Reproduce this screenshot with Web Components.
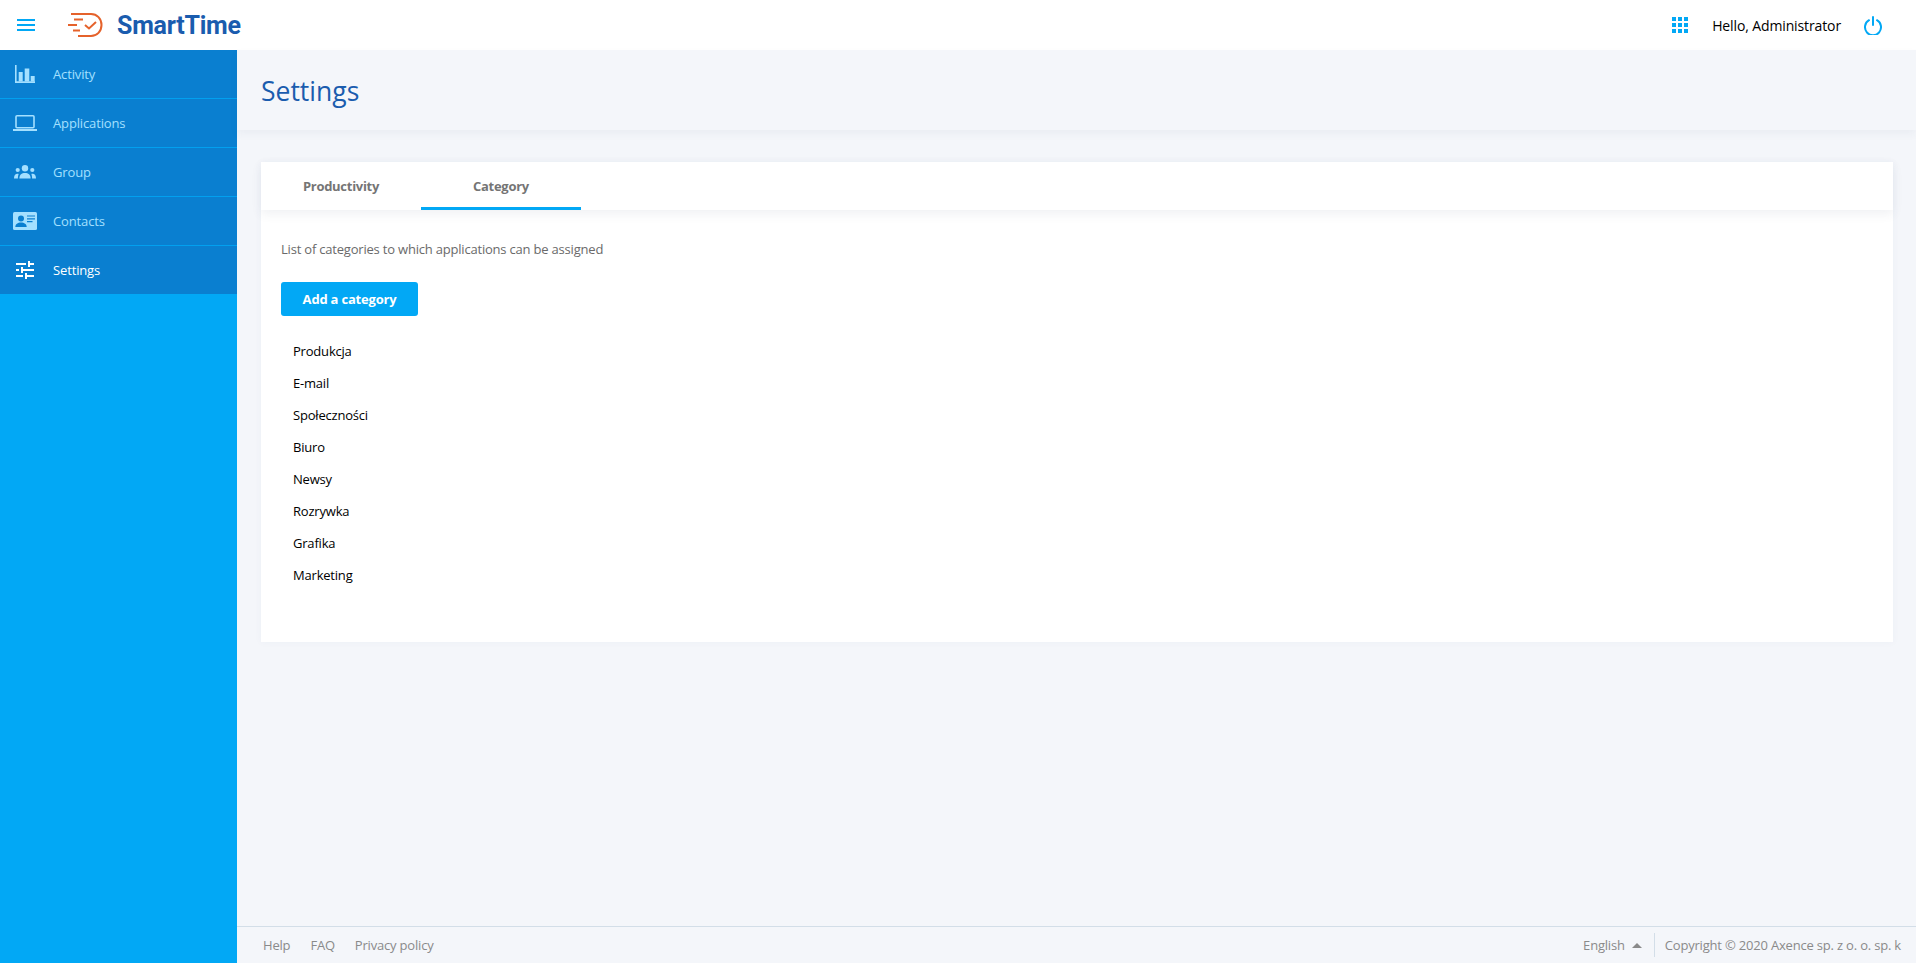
<!DOCTYPE html>
<html lang="en">
<head>
<meta charset="utf-8">
<title>SmartTime</title>
<style>
  html, body { margin: 0; height: 100%; }
  body { font-family: "Open Sans", "Liberation Sans", sans-serif; background: #f4f6fa; overflow: hidden; }
  st-app { height: 963px; }
</style>
</head>
<body>
<st-app>
  <st-header slot="header"></st-header>
  <st-sidebar slot="sidebar">
    <st-nav-item icon="activity">Activity</st-nav-item>
    <st-nav-item icon="applications">Applications</st-nav-item>
    <st-nav-item icon="group">Group</st-nav-item>
    <st-nav-item icon="contacts">Contacts</st-nav-item>
    <st-nav-item icon="settings" active>Settings</st-nav-item>
  </st-sidebar>
  <st-page-title slot="title">Settings</st-page-title>
  <st-card slot="main">
    <st-tab slot="tabs">Productivity</st-tab>
    <st-tab slot="tabs" active>Category</st-tab>
    <st-desc>List of categories to which applications can be assigned</st-desc>
    <st-button>Add a category</st-button>
    <st-category-list>
      <st-category>Produkcja</st-category>
      <st-category>E-mail</st-category>
      <st-category>Społeczności</st-category>
      <st-category>Biuro</st-category>
      <st-category>Newsy</st-category>
      <st-category>Rozrywka</st-category>
      <st-category>Grafika</st-category>
      <st-category>Marketing</st-category>
    </st-category-list>
  </st-card>
  <st-footer slot="footer"></st-footer>
</st-app>

<script>
const ICONS = {
  activity: `<svg width="20" height="18" viewBox="0 0 20 18" fill="currentColor"><path d="M0 0h1.600v16.200H20V18H0z"/><rect x="3.700" y="7" width="4" height="9.500"/><rect x="9.700" y="3.500" width="4.600" height="13"/><rect x="15.700" y="11" width="4" height="5.500"/></svg>`,
  applications: `<svg width="24" height="16" viewBox="0 0 24 16" fill="none" stroke="currentColor"><rect x="3" y=".8" width="18" height="12" rx="1" stroke-width="1.600"/><path d="M0 15h24" stroke-width="2"/></svg>`,
  group: `<svg width="22" height="14" viewBox="0 0 22 14" fill="currentColor"><circle cx="11" cy="3.200" r="3.200"/><circle cx="3.700" cy="5" r="2.100"/><circle cx="18.300" cy="5" r="2.100"/><path d="M5.400 13.500c0-3.600 2.300-5.400 5.600-5.400s5.600 1.800 5.600 5.400z"/><path d="M0 13.500c0-2.800.9-4.600 3-4.800.8-.1 1.300.1 1.700.3-.5 1-.8 2.500-.8 4.500z"/><path d="M22 13.500c0-2.800-.9-4.600-3-4.800-.8-.1-1.300.1-1.700.3.5 1 .8 2.500.8 4.500z"/></svg>`,
  contacts: `<svg width="24" height="18" viewBox="0 0 24 18"><rect width="24" height="18" rx="1.500" fill="currentColor"/><circle cx="8" cy="6.400" r="3" fill="#0a7fd0"/><path d="M2.300 15c0-3 2.500-4.500 5.700-4.500s5.700 1.500 5.700 4.500z" fill="#0a7fd0"/><path d="M14 4h8M14 6.800h8M14 9.600h5.500" stroke="#0a7fd0" stroke-width="1.200"/></svg>`,
  settings: `<svg width="18" height="18" viewBox="0 0 18 18" fill="none" stroke="currentColor" stroke-width="2"><path d="M0 3h10M12 3h6M13 0v6M0 9h3M5 9h13M6 6v6M0 15h7M9 15h9M10 12v6"/></svg>`
};

function define(name, css, html, setup) {
  customElements.define(name, class extends HTMLElement {
    constructor() {
      super();
      this.attachShadow({ mode: 'open' });
      this.shadowRoot.innerHTML = `<style>${css}</style>${html}`;
    }
    connectedCallback() {
      if (setup) setup(this);
    }
  });
}

define('st-app', `
  :host { display: grid; grid-template-columns: 237px 1fr; grid-template-rows: 50px 80px 1fr 37px; }
  .header { grid-column: 1 / 3; }
  .sidebar { grid-row: 2 / 5; display: flex; }
  .main { padding: 32px 23px 0 24px; }
`, `
  <div class="header"><slot name="header"></slot></div>
  <div class="sidebar"><slot name="sidebar"></slot></div>
  <div><slot name="title"></slot></div>
  <div class="main"><slot name="main"></slot></div>
  <div><slot name="footer"></slot></div>
`);

define('st-header', `
  :host { display: flex; align-items: center; height: 50px; background: #fff; color: #000; }
  .burger { margin-left: 17px; width: 18px; height: 12px; display: flex; flex-direction: column; justify-content: space-between; }
  .burger i { display: block; height: 2px; background: #02a8f5; }
  .logo { margin-left: 33px; display: block; }
  .brand { margin-left: 14px; font: 700 25px/1 Roboto, "Liberation Sans", sans-serif; color: #1a5cae; letter-spacing: -.25px; }
  .right { margin-left: auto; display: flex; align-items: center; }
  .hello { margin-left: 24px; font-size: 14px; letter-spacing: -.12px; }
  .power { margin-left: 23px; margin-right: 34px; display: block; }
  svg { display: block; }
`, `
  <div class="burger"><i></i><i></i><i></i></div>
  <svg class="logo" width="35" height="24" viewBox="0 0 35 24" fill="none" stroke="#e5622b" stroke-width="2">
    <path d="M3 1h20c6 0 10.500 4.800 10.500 11S29 23 23 23H10"/>
    <path d="M6 6.500h9M0 12h9M5 17.500h7"/>
    <path d="M17 12l4 3.500 7-6.500"/>
  </svg>
  <span class="brand">SmartTime</span>
  <div class="right">
    <svg width="16" height="16" viewBox="0 0 16 16" fill="#02a8f5">
      <rect width="4" height="4"/><rect x="6" width="4" height="4"/><rect x="12" width="4" height="4"/>
      <rect y="6" width="4" height="4"/><rect x="6" y="6" width="4" height="4"/><rect x="12" y="6" width="4" height="4"/>
      <rect y="12" width="4" height="4"/><rect x="6" y="12" width="4" height="4"/><rect x="12" y="12" width="4" height="4"/>
    </svg>
    <span class="hello">Hello, Administrator</span>
    <svg class="power" width="18" height="19" viewBox="0 0 18 19" fill="none" stroke="#02a8f5" stroke-width="2" stroke-linecap="round">
      <path d="M5 4.200a8 8 0 1 0 8 0"/><path d="M9 1v8"/>
    </svg>
  </div>
`);

define('st-sidebar', `
  :host { display: block; width: 237px; background: #02a8f5; }
`, `<slot></slot>`);

define('st-nav-item', `
  :host { display: flex; align-items: center; height: 48px; background: #0a7fd0; color: #a4e0ff; border-bottom: 1px solid #02a0ef; font-size: 13px; letter-spacing: -.14px; }
  :host([active]) { color: #fff; border-bottom: 0; }
  .icon { width: 24px; margin-left: 13px; margin-right: 16px; display: flex; justify-content: center; }
  svg { display: block; }
`, `<span class="icon"></span><slot></slot>`, (el) => {
  el.shadowRoot.querySelector('.icon').innerHTML = ICONS[el.getAttribute('icon')];
});

define('st-page-title', `
  :host { display: flex; align-items: center; height: 80px; padding: 2px 0 0 24px; box-sizing: border-box; color: #1a5cae; font-size: 26.500px; box-shadow: 0 4px 8px rgba(60, 80, 120, .05); }
`, `<slot></slot>`);

define('st-card', `
  :host { display: block; height: 480px; background: #fff; box-shadow: 0 0 8px rgba(60, 80, 120, .04); }
  .tabs { display: flex; height: 48px; box-shadow: 0 4px 10px rgba(60, 80, 120, .08); }
  .body { padding: 30px 20px 0; }
`, `
  <div class="tabs"><slot name="tabs"></slot></div>
  <div class="body"><slot></slot></div>
`);

define('st-tab', `
  :host { display: flex; align-items: center; justify-content: center; width: 160px; height: 48px; box-sizing: border-box; font-size: 13px; font-weight: 700; color: #757575; letter-spacing: -.28px; }
  :host([active]) { border-bottom: 3px solid #02a8f5; padding-top: 3px; }
`, `<slot></slot>`);

define('st-desc', `
  :host { display: block; font-size: 13px; line-height: 18px; color: #6a6a6a; margin-bottom: 24px; letter-spacing: -.2px; }
`, `<slot></slot>`);

define('st-button', `
  :host { display: flex; align-items: center; justify-content: center; width: 137px; height: 34px; border-radius: 3px; background: #02a8f5; color: #fff; font-size: 13px; font-weight: 700; letter-spacing: -.2px; }
`, `<slot></slot>`);

define('st-category-list', `
  :host { display: block; margin-top: 19px; }
`, `<slot></slot>`);

define('st-category', `
  :host { display: flex; align-items: center; height: 32px; padding-left: 12px; font-size: 13px; color: #000; letter-spacing: -.2px; }
`, `<slot></slot>`);

define('st-footer', `
  :host { display: flex; align-items: center; height: 37px; box-sizing: border-box; border-top: 1px solid #d3dee8; font-size: 13px; color: #8a8a8a; padding: 0 15px 0 26px; letter-spacing: -.19px; }
  a { margin-right: 20px; }
  .right { margin-left: auto; display: flex; align-items: center; }
  .caret { width: 0; height: 0; border: 5px solid transparent; border-top: 0; border-bottom: 5px solid #8a8a8a; margin: 0 12px 0 7px; }
  .sep { width: 1px; height: 24px; background: #d3dee8; margin-right: 10px; }
`, `
  <a>Help</a><a>FAQ</a><a>Privacy policy</a>
  <div class="right">
    <span>English</span><i class="caret"></i><i class="sep"></i>
    <span>Copyright © 2020 Axence sp. z o. o. sp. k</span>
  </div>
`);
</script>
</body>
</html>
